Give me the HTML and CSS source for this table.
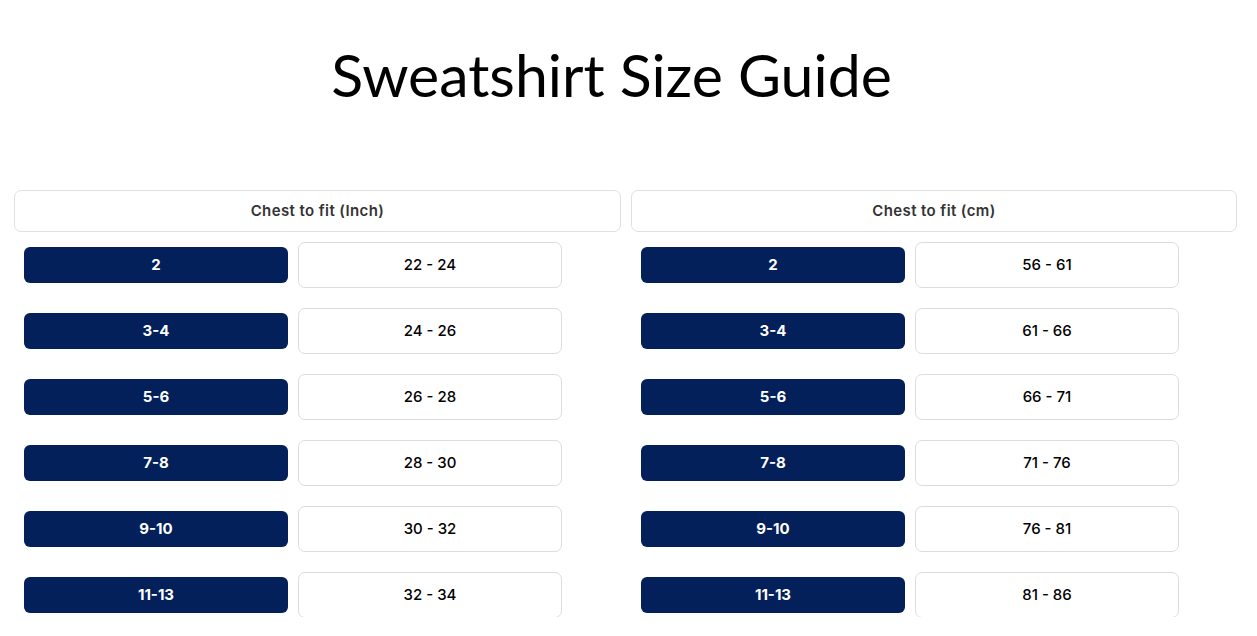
FILE: index.html
```html
<!DOCTYPE html>
<html lang="en">
<head>
<meta charset="utf-8">
<title>Sweatshirt Size Guide</title>
<link rel="stylesheet" href="styles.css">
</head>
<body>
<div class="page">
  <h1 class="title">Sweatshirt Size Guide</h1>
  <div class="tables">
    <section class="chart">
      <div class="chart-head">Chest to fit (Inch)</div>
      <div class="rows">
        <div class="row"><div class="size">2</div><div class="value">22 - 24</div></div>
        <div class="row"><div class="size">3-4</div><div class="value">24 - 26</div></div>
        <div class="row"><div class="size">5-6</div><div class="value">26 - 28</div></div>
        <div class="row"><div class="size">7-8</div><div class="value">28 - 30</div></div>
        <div class="row"><div class="size">9-10</div><div class="value">30 - 32</div></div>
        <div class="row"><div class="size">11-13</div><div class="value">32 - 34</div></div>
      </div>
    </section>
    <section class="chart">
      <div class="chart-head">Chest to fit (cm)</div>
      <div class="rows">
        <div class="row"><div class="size">2</div><div class="value">56 - 61</div></div>
        <div class="row"><div class="size">3-4</div><div class="value">61 - 66</div></div>
        <div class="row"><div class="size">5-6</div><div class="value">66 - 71</div></div>
        <div class="row"><div class="size">7-8</div><div class="value">71 - 76</div></div>
        <div class="row"><div class="size">9-10</div><div class="value">76 - 81</div></div>
        <div class="row"><div class="size">11-13</div><div class="value">81 - 86</div></div>
      </div>
    </section>
  </div>
</div>
</body>
</html>
```

FILE: styles.css
```css
* { box-sizing: border-box; }
html, body { margin: 0; padding: 0; background: #fff; }
body { font-family: Inter, "Noto Sans", sans-serif; color: #000; }

.page {
  padding: 0 20px 0 14px;
}

.title {
  margin: 0;
  padding: 45px 28px 0 0;
  height: 190px;
  font-family: Lato, "Liberation Sans", sans-serif;
  font-weight: 400;
  font-size: 59px;
  line-height: 59px;
  text-align: center;
  color: #000;
}

.tables {
  display: grid;
  grid-template-columns: 607px 606px;
  column-gap: 10px;
}

.chart-head {
  height: 42px;
  border: 1px solid #e0e0e0;
  border-radius: 7px;
  display: flex;
  align-items: center;
  justify-content: center;
  padding-bottom: 1px;
  font-size: 15px;
  font-weight: 600;
  letter-spacing: 0.4px;
  color: #333;
}

.rows {
  display: flex;
  flex-direction: column;
  gap: 21px;
  padding: 10px 0 0 10px;
}

.row {
  display: flex;
  align-items: center;
  gap: 10px;
  height: 45px;
}

.size {
  width: 264px;
  height: 36px;
  background: #03205a;
  color: #fff;
  border-radius: 6px;
  display: flex;
  align-items: center;
  justify-content: center;
  font-size: 15px;
  font-weight: 700;
}

.value {
  width: 264px;
  height: 46px;
  border: 1px solid #dcdcdc;
  border-radius: 7px;
  display: flex;
  align-items: center;
  justify-content: center;
  font-size: 15px;
  font-weight: 500;
  color: #000;
}
```
